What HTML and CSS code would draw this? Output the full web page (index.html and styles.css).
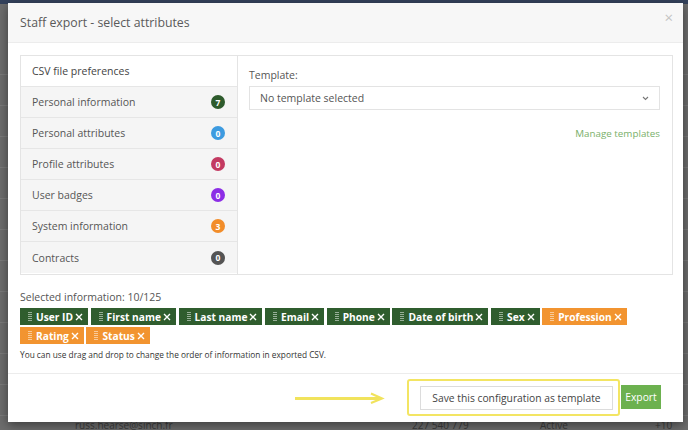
FILE: index.html
```html
<!DOCTYPE html>
<html>
<head>
<meta charset="utf-8">
<link rel="stylesheet" href="styles.css">
</head>
<body>
<div class="page">
  <div class="topbar"></div>
  <div class="bg-rows">
    <div class="bg-row"></div><div class="bg-row"></div><div class="bg-row"></div><div class="bg-row"></div>
    <div class="bg-row"></div><div class="bg-row"></div><div class="bg-row"></div><div class="bg-row"></div>
    <div class="bg-row"></div><div class="bg-row"></div><div class="bg-row"></div><div class="bg-row"></div>
    <div class="bg-row last">
      <span class="bg-email">russ.hearse@sinch.fr</span>
      <span class="bg-phone">227 540 779</span>
      <span class="bg-status">Active</span>
      <span class="bg-tz">+10</span>
    </div>
  </div>
</div>

<div class="modal">
  <div class="modal-header">
    <h1 class="modal-title">Staff export - select attributes</h1>
    <span class="close">×</span>
  </div>

  <div class="modal-body">
    <div class="panel">
      <div class="menu">
        <div class="menu-item active">CSV file preferences</div>
        <div class="menu-item">Personal information <span class="badge b-green">7</span></div>
        <div class="menu-item">Personal attributes <span class="badge b-blue">0</span></div>
        <div class="menu-item">Profile attributes <span class="badge b-red">0</span></div>
        <div class="menu-item">User badges <span class="badge b-purple">0</span></div>
        <div class="menu-item">System information <span class="badge b-orange">3</span></div>
        <div class="menu-item">Contracts <span class="badge b-gray">0</span></div>
      </div>
      <div class="content">
        <div class="label">Template:</div>
        <div class="select">
          <span>No template selected</span>
          <svg class="chev" width="7" height="5" viewBox="0 0 7 5"><path d="M1 1 L3.5 3.5 L6 1" fill="none" stroke="#777" stroke-width="1.1"/></svg>
        </div>
        <div class="manage"><a class="manage-link">Manage templates</a></div>
      </div>
    </div>

    <div class="selected-label">Selected information: 10/125</div>
    <div class="tags">
      <span class="tag green"><svg class="grip" width="4" height="10" viewBox="0 0 4 10"><rect y="0" width="4" height="1"/><rect y="2" width="4" height="1"/><rect y="4" width="4" height="1"/><rect y="6" width="4" height="1"/><rect y="8" width="4" height="1"/></svg>User ID<svg class="x" width="8" height="8" viewBox="0 0 8 8"><path d="M1 1 L7 7 M7 1 L1 7"/></svg></span>
      <span class="tag green"><svg class="grip" width="4" height="10" viewBox="0 0 4 10"><rect y="0" width="4" height="1"/><rect y="2" width="4" height="1"/><rect y="4" width="4" height="1"/><rect y="6" width="4" height="1"/><rect y="8" width="4" height="1"/></svg>First name<svg class="x" width="8" height="8" viewBox="0 0 8 8"><path d="M1 1 L7 7 M7 1 L1 7"/></svg></span>
      <span class="tag green"><svg class="grip" width="4" height="10" viewBox="0 0 4 10"><rect y="0" width="4" height="1"/><rect y="2" width="4" height="1"/><rect y="4" width="4" height="1"/><rect y="6" width="4" height="1"/><rect y="8" width="4" height="1"/></svg>Last name<svg class="x" width="8" height="8" viewBox="0 0 8 8"><path d="M1 1 L7 7 M7 1 L1 7"/></svg></span>
      <span class="tag green"><svg class="grip" width="4" height="10" viewBox="0 0 4 10"><rect y="0" width="4" height="1"/><rect y="2" width="4" height="1"/><rect y="4" width="4" height="1"/><rect y="6" width="4" height="1"/><rect y="8" width="4" height="1"/></svg>Email<svg class="x" width="8" height="8" viewBox="0 0 8 8"><path d="M1 1 L7 7 M7 1 L1 7"/></svg></span>
      <span class="tag green"><svg class="grip" width="4" height="10" viewBox="0 0 4 10"><rect y="0" width="4" height="1"/><rect y="2" width="4" height="1"/><rect y="4" width="4" height="1"/><rect y="6" width="4" height="1"/><rect y="8" width="4" height="1"/></svg>Phone<svg class="x" width="8" height="8" viewBox="0 0 8 8"><path d="M1 1 L7 7 M7 1 L1 7"/></svg></span>
      <span class="tag green"><svg class="grip" width="4" height="10" viewBox="0 0 4 10"><rect y="0" width="4" height="1"/><rect y="2" width="4" height="1"/><rect y="4" width="4" height="1"/><rect y="6" width="4" height="1"/><rect y="8" width="4" height="1"/></svg>Date of birth<svg class="x" width="8" height="8" viewBox="0 0 8 8"><path d="M1 1 L7 7 M7 1 L1 7"/></svg></span>
      <span class="tag green"><svg class="grip" width="4" height="10" viewBox="0 0 4 10"><rect y="0" width="4" height="1"/><rect y="2" width="4" height="1"/><rect y="4" width="4" height="1"/><rect y="6" width="4" height="1"/><rect y="8" width="4" height="1"/></svg>Sex<svg class="x" width="8" height="8" viewBox="0 0 8 8"><path d="M1 1 L7 7 M7 1 L1 7"/></svg></span>
      <span class="tag orange"><svg class="grip" width="4" height="10" viewBox="0 0 4 10"><rect y="0" width="4" height="1"/><rect y="2" width="4" height="1"/><rect y="4" width="4" height="1"/><rect y="6" width="4" height="1"/><rect y="8" width="4" height="1"/></svg>Profession<svg class="x" width="8" height="8" viewBox="0 0 8 8"><path d="M1 1 L7 7 M7 1 L1 7"/></svg></span>
      <span class="tag orange"><svg class="grip" width="4" height="10" viewBox="0 0 4 10"><rect y="0" width="4" height="1"/><rect y="2" width="4" height="1"/><rect y="4" width="4" height="1"/><rect y="6" width="4" height="1"/><rect y="8" width="4" height="1"/></svg>Rating<svg class="x" width="8" height="8" viewBox="0 0 8 8"><path d="M1 1 L7 7 M7 1 L1 7"/></svg></span>
      <span class="tag orange"><svg class="grip" width="4" height="10" viewBox="0 0 4 10"><rect y="0" width="4" height="1"/><rect y="2" width="4" height="1"/><rect y="4" width="4" height="1"/><rect y="6" width="4" height="1"/><rect y="8" width="4" height="1"/></svg>Status<svg class="x" width="8" height="8" viewBox="0 0 8 8"><path d="M1 1 L7 7 M7 1 L1 7"/></svg></span>
    </div>
    <div class="hint">You can use drag and drop to change the order of information in exported CSV.</div>
  </div>

  <div class="modal-footer">
    <svg class="arrow" width="90" height="12" viewBox="0 0 90 12"><path d="M0 6.5 H84" stroke="#f1e35c" stroke-width="3"/><path d="M76 1.5 L87 6.5 L76 11" fill="none" stroke="#f1e35c" stroke-width="2.2"/></svg>
    <div class="highlight">
      <button class="btn btn-default">Save this configuration as template</button>
    </div>
    <button class="btn btn-export">Export</button>
  </div>
</div>
</body>
</html>
```

FILE: styles.css
```css
* { box-sizing: border-box; }
html, body { margin: 0; padding: 0; }
body {
  width: 688px;
  height: 430px;
  overflow: hidden;
  background: #6d6d6d;
  font-family: "Open Sans", "DejaVu Sans", sans-serif;
  position: relative;
}
.page { width: 688px; height: 430px; overflow: hidden; }
.topbar { height: 4px; background: #34425c; }
.bg-rows { padding-top: 40px; }
.bg-row {
  height: 31px;
  border-bottom: 1px solid #7a7a7a;
  position: relative;
}
.bg-row.last { border-bottom: none; height: 20px; }
.bg-row span {
  position: absolute;
  top: 4px;
  font-size: 10px;
  line-height: 10px;
  color: #3c3c3c;
}
.bg-email { left: 75px; }
.bg-phone { left: 412px; }
.bg-status { left: 540px; }
.bg-tz { left: 655px; }

.modal {
  position: absolute;
  left: 8px;
  top: 3px;
  width: 675px;
  height: 419px;
  background: #fff;
  box-shadow: 0 3px 10px rgba(0,0,0,0.45);
  display: flex;
  flex-direction: column;
}
.modal-header {
  height: 40px;
  background: #f7f7f7;
  border-bottom: 1px solid #ececec;
  display: flex;
  align-items: center;
  justify-content: space-between;
  padding: 0 10px 1px 12px;
}
.modal-title {
  margin: 0;
  font-size: 12.3px;
  font-weight: 400;
  color: #5a5a5a;
}
.close {
  font-size: 15px;
  color: #c4c4c4;
  margin-top: -10px;
}

.modal-body {
  padding: 12px 10px 0 12px;
  flex: 1;
}
.panel {
  border: 1px solid #e4e4e4;
  display: flex;
  height: 220px;
}
.menu {
  width: 217px;
  border-right: 1px solid #e4e4e4;
  display: flex;
  flex-direction: column;
}
.menu-item {
  height: 31px;
  display: flex;
  align-items: center;
  justify-content: space-between;
  padding: 0 12px 0 11px;
  font-size: 10.5px;
  color: #555;
  background: #f5f5f5;
  border-bottom: 1px solid #e6e6e6;
}
.menu-item:last-child { border-bottom: none; }
.menu-item.active { background: #fff; color: #444; }
.badge {
  width: 14px;
  height: 14px;
  border-radius: 50%;
  color: #fff;
  font-size: 8.5px;
  font-weight: 700;
  display: flex;
  align-items: center;
  justify-content: center;
}
.b-green { background: #2e5b2c; }
.b-blue { background: #3d9be0; }
.b-red { background: #c33a62; }
.b-purple { background: #8c2ee6; }
.b-orange { background: #f28d2a; }
.b-gray { background: #545454; }

.content {
  flex: 1;
  padding: 12px 12px 0 11px;
}
.label {
  font-size: 10.5px;
  color: #555;
  margin-bottom: 4px;
}
.select {
  height: 24px;
  border: 1px solid #e3e3e3;
  display: flex;
  align-items: center;
  justify-content: space-between;
  padding: 0 10px 0 10px;
  font-size: 10.5px;
  color: #555;
}
.manage {
  text-align: right;
  margin-top: 10px;
}
.manage-link {
  font-size: 9.8px;
  color: #79b06a;
}

.selected-label {
  margin-top: 15px;
  font-size: 10.5px;
  color: #555;
}
.tags {
  display: flex;
  flex-wrap: wrap;
  gap: 2px 2.6px;
  margin-top: 4px;
  width: 620px;
}
.tag {
  height: 17px;
  display: inline-flex;
  align-items: center;
  padding: 0 5px 0 8px;
  font-size: 10.2px;
  font-weight: 700;
  color: #fff;
}
.tag.green { background: #2f5d2e; }
.tag.orange { background: #f29430; }
.grip { fill: rgba(255,255,255,0.5); margin-right: 4px; }
.x { stroke: #fff; stroke-width: 1.4; margin-left: 2px; }
.hint {
  margin-top: 5px;
  font-size: 8.3px;
  color: #333;
}

.modal-footer {
  border-top: 1px solid #ececec;
  height: 49px;
  display: flex;
  align-items: center;
  justify-content: flex-end;
  padding: 0 22px 2px 0;
}
.arrow { margin-right: 22px; margin-top: 2px; }
.highlight {
  border: 2px solid #f3e563;
  border-radius: 3px;
  padding: 4px 5px 4px 11px;
}
.btn {
  font-family: "Open Sans", "DejaVu Sans", sans-serif;
  font-size: 10.3px;
  height: 24px;
  padding: 0;
  border-radius: 0;
  white-space: nowrap;
  cursor: pointer;
}
.btn-default {
  width: 193px;
  background: #fff;
  border: 1px solid #dcdcdc;
  color: #444;
}
.btn-export {
  background: #6cb14f;
  border: 1px solid #6cb14f;
  color: #fff;
  width: 40px;
  margin-left: 1px;
}
```
